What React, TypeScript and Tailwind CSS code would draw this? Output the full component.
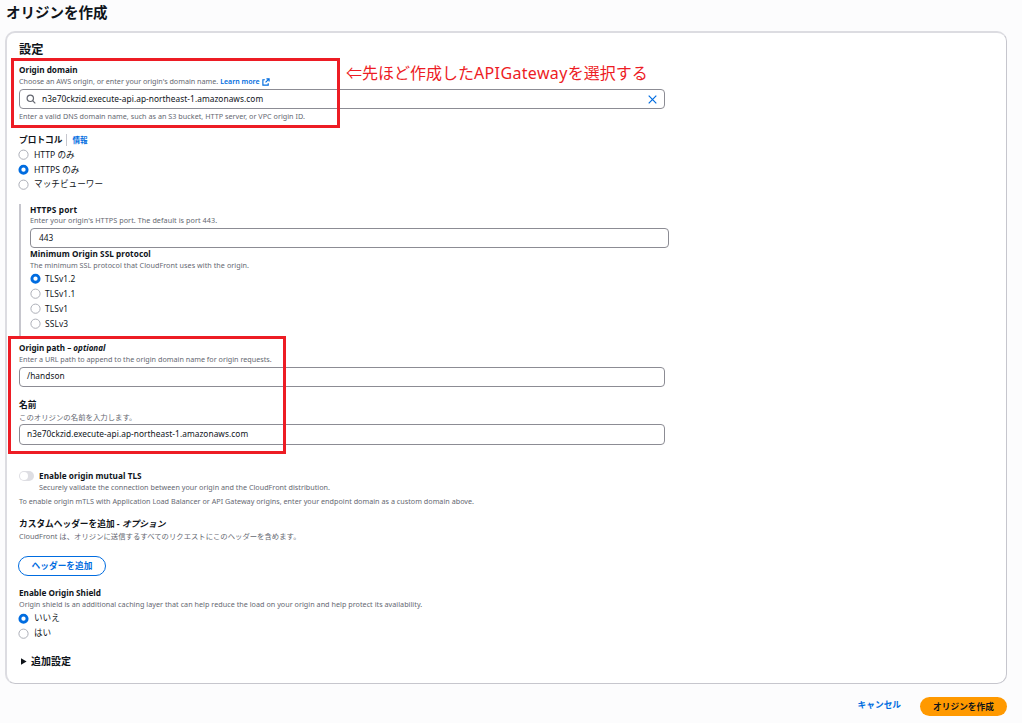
import type { ReactNode } from "react";

function Radio({ label, checked = false, cls = "-mt-px ml-[4px] text-[8.4px] tracking-[0.1px]" }: { label: string; checked?: boolean; cls?: string }) {
  return (
    <div className="flex h-[15px] items-center">
      <svg className="h-[11px] w-[11px] shrink-0" viewBox="0 0 11 11">
        {checked ? (
          <circle cx="5.5" cy="5.7" r="3.6" fill="#fff" stroke="#006ce0" strokeWidth="2.9" />
        ) : (
          <circle cx="5.5" cy="5.7" r="4.6" fill="#fff" stroke="#a4a7b0" strokeWidth="0.9" />
        )}
      </svg>
      <span className={`whitespace-nowrap leading-[15px] text-[#0f141a] ${cls}`}>{label}</span>
    </div>
  );
}

function Label({ children, cls = "text-[8.2px]" }: { children: ReactNode; cls?: string }) {
  return <div className={`h-3 whitespace-nowrap leading-3 font-bold text-[#0f141a] ${cls}`}>{children}</div>;
}

function Desc({ children, cls = "", size = "text-[7.2px] leading-[9px]" }: { children: ReactNode; cls?: string; size?: string }) {
  return <div className={`h-[10px] whitespace-nowrap text-[#656871] ${size} ${cls}`}>{children}</div>;
}

function Field({ children, cls = "h-5" }: { children: ReactNode; cls?: string }) {
  return (
    <div className={`flex items-center rounded-[4px] border border-[#8c8c94] bg-white text-[8.3px] tracking-[0.06px] text-[#0f141a] ${cls}`}>
      {children}
    </div>
  );
}

export default function App() {
  return (
    <div className="relative h-[726px] w-[1022px] overflow-hidden bg-white font-['Noto_Sans','Noto_Sans_CJK_JP',sans-serif]">
      <div className="flex h-[723px] flex-col bg-[#fcfcfd]">
        <h1 className="h-[31px] pl-[6px] text-[14.5px] leading-[24px] font-bold text-[#0f141a]">オリジンを作成</h1>

        <main className="ml-[5px] h-[653px] w-[1002px] shrink-0 rounded-[10px] border-t-2 border-r border-b border-l-2 border-t-[#dcdce1] border-r-[#c6c6cd] border-b-[#c6c6cd] border-l-[#dcdce1] bg-white pt-2 pl-3">
          <h2 className="h-4 text-[12.2px] leading-[18px] font-bold text-[#0f141a]">設定</h2>

          <section className="mt-[7px] w-[646px]">
            <Label cls="mb-px text-[8.2px]">Origin domain</Label>
            <div className="flex h-[10px] items-center">
              <Desc cls="-tracking-[0.01px]">Choose an AWS origin, or enter your origin's domain name.</Desc>
              <span className="ml-[2px] h-[10px] text-[7px] leading-[9px] font-semibold text-[#006ce0]">Learn more</span>
              <svg className="ml-[2px] h-2 w-2" viewBox="0 0 9 9" fill="none" stroke="#006ce0" strokeWidth="1.3">
                <path d="M3.2 2H1v6h6V5.8M5 1h3v3M8 1 4 5" />
              </svg>
            </div>
            <Field cls="mt-[2px] h-5 pr-[7px] pl-[6px]">
              <svg className="h-[10px] w-[10px]" viewBox="0 0 10 10" fill="none" stroke="#656871" strokeWidth="1.2">
                <circle cx="4.3" cy="4.3" r="3.2" />
                <path d="m6.6 6.6 2.7 2.7" />
              </svg>
              <span className="ml-[6px] flex-1">n3e70ckzid.execute-api.ap-northeast-1.amazonaws.com</span>
              <svg className="h-[9px] w-[9px]" viewBox="0 0 9 9" stroke="#006ce0" strokeWidth="1.2">
                <path d="m.7.7 7.6 7.6M8.3.7.7 8.3" />
              </svg>
            </Field>
            <Desc cls="mt-[3px] tracking-[0.03px]">Enter a valid DNS domain name, such as an S3 bucket, HTTP server, or VPC origin ID.</Desc>
          </section>

          <section className="mt-3">
            <div className="mb-px flex h-3 items-center">
              <Label cls="text-[8.7px]">プロトコル</Label>
              <span className="ml-[4px] h-3 w-px bg-[#c6c6cd]" />
              <span className="ml-[5px] text-[7.6px] leading-3 font-bold text-[#006ce0]">情報</span>
            </div>
            <div className="-ml-px">
              <Radio label="HTTP のみ" cls="mt-px ml-[5px] text-[8.6px]" />
              <Radio label="HTTPS のみ" checked cls="mt-px ml-[5px] text-[8.6px]" />
              <Radio label="マッチビューワー" cls="ml-[5px] text-[8.6px] tracking-[0.05px]" />
            </div>
          </section>

          <section className="mt-3 h-[132px] w-[650px] border-l-2 border-[#c6c6cd] pl-[9px]">
            <Label cls="text-[8.3px] tracking-[0.15px]">HTTPS port</Label>
            <Desc cls="tracking-[0.07px]">Enter your origin's HTTPS port. The default is port 443.</Desc>
            <Field cls="mt-[2px] h-5 pl-[8px]">443</Field>
            <Label cls="text-[8.2px] tracking-[0.07px]">Minimum Origin SSL protocol</Label>
            <Desc cls="mt-px tracking-[0.05px]">The minimum SSL protocol that CloudFront uses with the origin.</Desc>
            <Radio label="TLSv1.2" checked />
            <Radio label="TLSv1.1" />
            <Radio label="TLSv1" />
            <Radio label="SSLv3" />
          </section>

          <section className="mt-[6px] w-[646px]">
            <Label cls="text-[8.1px]">
              Origin path – <em>optional</em>
            </Label>
            <Desc cls="mt-px tracking-[0.01px]">Enter a URL path to append to the origin domain name for origin requests.</Desc>
            <Field cls="mt-[2px] h-5 pl-[7px]">
              <span className="-mt-px">/handson</span>
            </Field>
            <Label cls="mt-3 text-[8.7px]">名前</Label>
            <Desc size="text-[7.4px] leading-[11px]" cls="mt-px">このオリジンの名前を入力します。</Desc>
            <Field cls="mt-[2px] h-[21px] pl-[7px]">
              <span className="-mt-px">n3e70ckzid.execute-api.ap-northeast-1.amazonaws.com</span>
            </Field>
          </section>

          <section className="mt-[25px]">
            <div className="flex h-3 items-center">
              <span className="flex h-[10px] w-[15px] items-center rounded-full bg-[#dedee3] pl-px">
                <span className="h-2 w-2 rounded-full bg-white" />
              </span>
              <Label cls="ml-[5px] text-[8.2px] tracking-[0.06px]">Enable origin mutual TLS</Label>
            </div>
            <Desc cls="mt-px pl-5 tracking-[0.02px]">Securely validate the connection between your origin and the CloudFront distribution.</Desc>
            <Desc cls="mt-1 tracking-[0.02px]">
              To enable origin mTLS with Application Load Balancer or API Gateway origins, enter your endpoint domain as a custom domain above.
            </Desc>
          </section>

          <section className="mt-[11px]">
            <Label cls="text-[8.7px]">
              カスタムヘッダーを追加 - <em>オプション</em>
            </Label>
            <Desc size="text-[7.36px] leading-[10px]" cls="mt-px">CloudFront は、オリジンに送信するすべてのリクエストにこのヘッダーを含めます。</Desc>
            <button className="-ml-px mt-[15px] block h-5 w-[88px] rounded-full border border-[#006ce0] text-center text-[8.7px] leading-[17px] font-bold text-[#006ce0]">
              ヘッダーを追加
            </button>
          </section>

          <section className="mt-[11px]">
            <Label>Enable Origin Shield</Label>
            <Desc cls="mt-px mb-px tracking-[0.03px]">
              Origin shield is an additional caching layer that can help reduce the load on your origin and help protect its availability.
            </Desc>
            <div className="-ml-px">
              <Radio label="いいえ" checked cls="-mt-px ml-[5px] text-[8.6px]" />
              <Radio label="はい" cls="-mt-px ml-[5px] text-[8.6px]" />
            </div>
          </section>

          <div className="mt-[13px] flex h-[14px] items-center">
            <svg className="ml-[2px] h-[7px] w-[6px]" viewBox="0 0 6 7">
              <path d="M0 .2 5.6 3.5 0 6.8Z" fill="#0f141a" />
            </svg>
            <span className="ml-[4px] text-[10px] leading-[14px] font-bold text-[#0f141a]">追加設定</span>
          </div>
        </main>

        <footer className="mt-[13px] mr-[15px] flex h-[19px] items-center justify-end">
          <span className="-mt-[3px] mr-[19px] text-[8.7px] leading-[16px] font-bold text-[#006ce0]">キャンセル</span>
          <button className="h-[19px] w-[87px] rounded-full bg-[#ff9900] text-center text-[8.7px] leading-[16px] font-bold text-[#0f141a]">
            オリジンを作成
          </button>
        </footer>
      </div>

      <div className="absolute top-[58px] left-[11px] h-[70px] w-[329px] border-3 border-[#ed1c24]" />
      <div className="absolute top-[336px] left-[8px] h-[118px] w-[278px] border-3 border-[#ed1c24]" />
      <div className="absolute top-[61px] left-[346px] text-[16px] leading-6 whitespace-nowrap text-[#ed1c24]">
        ⇐先ほど作成した<span className="tracking-[0.35px]">APIGateway</span>を選択する
      </div>
    </div>
  );
}
